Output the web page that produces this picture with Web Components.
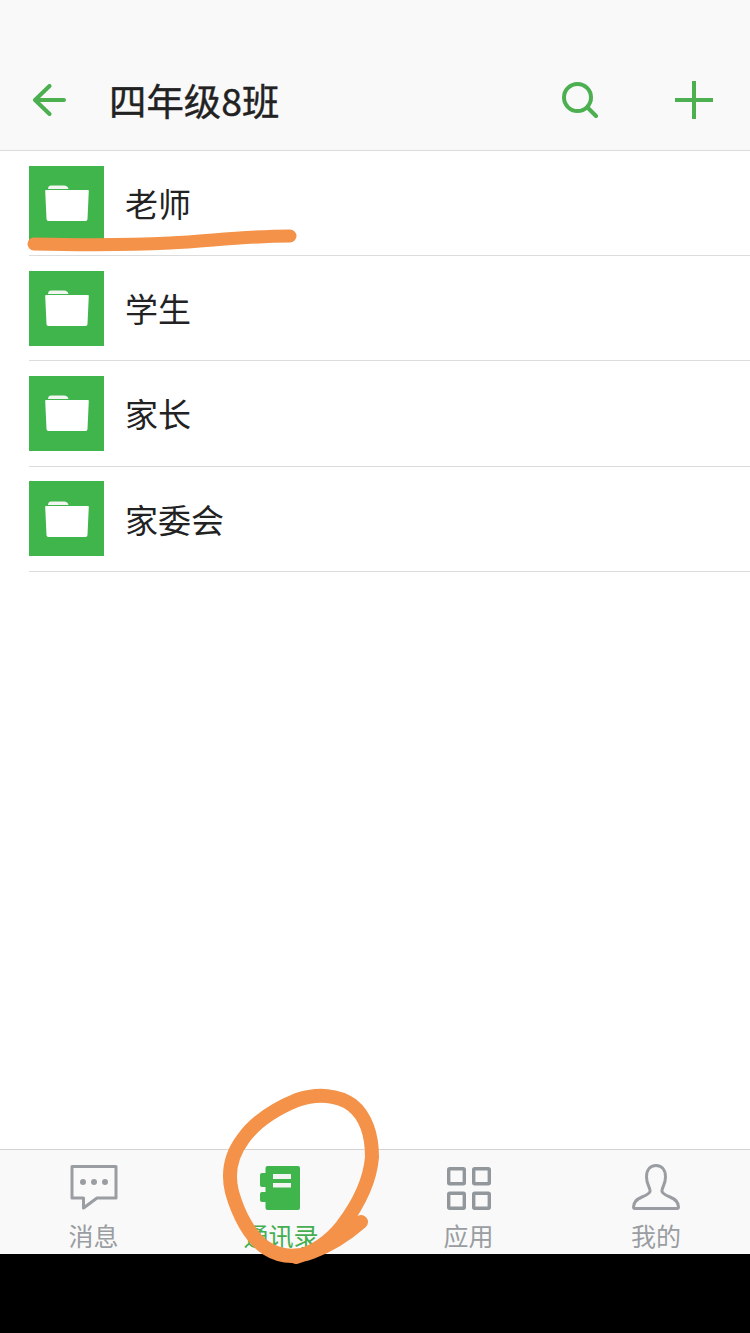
<!DOCTYPE html>
<html lang="zh">
<head>
<meta charset="utf-8">
<title>四年级8班</title>
<style>
  html, body { margin: 0; padding: 0; }
  body { background: #000; font-family: "Noto Sans CJK SC", "Noto Sans", sans-serif; }
</style>
</head>
<body>
<class-page>
  <class-header slot="header" title="四年级8班"></class-header>
  <folder-row>老师</folder-row>
  <folder-row>学生</folder-row>
  <folder-row>家长</folder-row>
  <folder-row>家委会</folder-row>
  <tab-bar slot="tabs">
    <tab-item icon="chat">消息</tab-item>
    <tab-item icon="book" active>通讯录</tab-item>
    <tab-item icon="grid">应用</tab-item>
    <tab-item icon="user">我的</tab-item>
  </tab-bar>
</class-page>

<script>
const ICONS = {
  chat: `<svg width="48" height="46" viewBox="0 0 48 46" fill="none" stroke="currentColor" stroke-width="3" stroke-linejoin="round">
      <path d="M2 1.500H46V33H27L13.500 43V33H2Z"/>
      <g fill="currentColor" stroke="none"><circle cx="13" cy="17" r="3"/><circle cx="24" cy="17" r="3"/><circle cx="35" cy="17" r="3"/></g>
    </svg>`,
  book: `<svg width="42" height="46" viewBox="0 0 42 46">
      <path fill="#3fb54b" d="M5.500 3a2 2 0 0 1 2-2H38a2 2 0 0 1 2 2V43a2 2 0 0 1-2 2H7.500a2 2 0 0 1-2-2V37H2a2 2 0 0 1-2-2V29a2 2 0 0 1 2-2H5.500V22H2a2 2 0 0 1-2-2V10a2 2 0 0 1 2-2H5.500Z"/>
      <path fill="#f4f4f4" d="M13 9H31V14H13ZM13 18H31V22.500H13Z"/>
    </svg>`,
  grid: `<svg width="44" height="43" viewBox="0 0 44 43" fill="none" stroke="#92979c" stroke-width="3.400">
      <rect x="1.700" y="1.700" width="15.600" height="15" rx="1"/><rect x="26.700" y="1.700" width="15.600" height="15" rx="1"/>
      <rect x="1.700" y="26.300" width="15.600" height="15" rx="1"/><rect x="26.700" y="26.300" width="15.600" height="15" rx="1"/>
    </svg>`,
  user: `<svg width="48" height="48" viewBox="0 0 48 48" fill="none" stroke="currentColor" stroke-width="3" stroke-linejoin="round">
      <path d="M24 1.500C18 1.500 14.500 6 14.500 13C14.500 19 17 22 18 26C19 29 15 31 10 33C5 35 1.500 38 1.500 43Q1.500 44.500 3 44.500H45Q46.500 44.500 46.500 43C46.500 38 43 35 38 33C33 31 29 29 30 26C31 22 33.500 19 33.500 13C33.500 6 30 1.500 24 1.500Z"/>
    </svg>`
};

class ClassPage extends HTMLElement {
  constructor() {
    super();
    this.attachShadow({ mode: "open" });
    this.shadowRoot.innerHTML = `
      <style>
        :host { display: flex; flex-direction: column; position: relative; width: 750px; height: 1333px; background: #fff; overflow: hidden; }
        .list { flex: 1; display: flex; flex-direction: column; }
        .black { height: 79px; background: #000; }
        svg { position: absolute; left: 0; top: 0; pointer-events: none; }
      </style>
      <slot name="header"></slot>
      <div class="list"><slot></slot></div>
      <slot name="tabs"></slot>
      <div class="black"></div>
      <svg width="750" height="1333" viewBox="0 0 750 1333" fill="none" stroke="#f39248" stroke-linecap="round" stroke-linejoin="round">
        <path stroke-width="13" d="M34 244C80 245 130 245 170 243C210 241 245 236 290 236"/>
        <path stroke-width="14" d="M361 1222C345 1236 328 1246 312 1252C296 1258 280 1257 266 1248C250 1237 238 1214 232 1192C227 1172 231 1155 243 1139C255 1122 275 1109 297 1100C318 1093 338 1095 352 1105C366 1116 372 1136 372 1157C370 1182 358 1205 342 1226C330 1241 315 1252 296 1257"/>
      </svg>
    `;
  }
}

class ClassHeader extends HTMLElement {
  constructor() {
    super();
    this.attachShadow({ mode: "open" });
    this.shadowRoot.innerHTML = `
      <style>
        :host { display: flex; box-sizing: border-box; height: 151px; padding: 50px 37px 0 33px; align-items: center; background: #f9f9f9; border-bottom: 1px solid #dcdcdc; color: #4caf50; }
        .title { margin-left: 43px; flex: 1; font-size: 37.400px; line-height: 50px; color: #222; -webkit-text-stroke: .4px #222; }
        svg { display: block; flex: none; }
        .search { margin-right: 77px; }
      </style>
      <svg width="33" height="32" viewBox="0 0 33 32" fill="none" stroke="currentColor" stroke-width="4" stroke-linecap="round" stroke-linejoin="round">
        <path d="M16.500 2L2 16L16.500 30M2 16H31"/>
      </svg>
      <span class="title"></span>
      <svg class="search" width="36" height="36" viewBox="0 0 36 36" fill="none" stroke="currentColor" stroke-width="4" stroke-linecap="round">
        <circle cx="15.500" cy="15.500" r="13.500"/><path d="M25.500 25.500L34 34"/>
      </svg>
      <svg width="38" height="38" viewBox="0 0 38 38" fill="none" stroke="currentColor" stroke-width="4">
        <path d="M19 0V38M0 19H38"/>
      </svg>
    `;
  }
  connectedCallback() {
    this.shadowRoot.querySelector(".title").textContent = this.getAttribute("title");
  }
}

class FolderRow extends HTMLElement {
  constructor() {
    super();
    this.attachShadow({ mode: "open" });
    this.shadowRoot.innerHTML = `
      <style>
        :host { display: block; padding-left: 29px; }
        .row { display: flex; align-items: center; gap: 21px; box-sizing: border-box; height: 105.200px; border-bottom: 1px solid #dcdcdc; font-size: 33px; line-height: 78px; color: #222; }
        .tile { width: 75px; height: 75px; background: #3fb54b; display: flex; align-items: center; justify-content: center; flex: none; }
        svg { display: block; }
      </style>
      <div class="row">
        <div class="tile">
          <svg width="44" height="36" viewBox="0 0 44 36">
            <path fill="#fff" d="M1 5H43a.8.8 0 0 1 .8.8L42.500 34a2 2 0 0 1-2 2H3.500a2 2 0 0 1-2-2L.2 5.800A.8.8 0 0 1 1 5Z"/>
            <path fill="#f2f5f2" d="M3 4C3 1.500 4.500 .5 6 .5H19C21.500 .5 23 2 23.500 4Z"/>
          </svg>
        </div>
        <span class="label"><slot></slot></span>
      </div>
    `;
  }
}

class TabBar extends HTMLElement {
  constructor() {
    super();
    this.attachShadow({ mode: "open" });
    this.shadowRoot.innerHTML = `
      <style>
        :host { display: grid; grid-template-columns: 187px 188px 187px 188px; box-sizing: border-box; height: 105px; background: #f9f9f9; border-top: 1px solid #d4d4d4; }
      </style>
      <slot></slot>
    `;
  }
}

class TabItem extends HTMLElement {
  constructor() {
    super();
    this.attachShadow({ mode: "open" });
    this.shadowRoot.innerHTML = `
      <style>
        :host { display: flex; flex-direction: column; align-items: center; padding-top: 14px; color: #9a9da1; font-size: 25px; overflow: hidden; }
        :host([active]) { color: #45ae50; }
        .icon { height: 48px; display: flex; align-items: center; justify-content: center; }
        .label { line-height: 30px; margin-top: 8px; }
        svg { display: block; }
      </style>
      <div class="icon"></div>
      <div class="label"><slot></slot></div>
    `;
  }
  connectedCallback() {
    this.shadowRoot.querySelector(".icon").innerHTML = ICONS[this.getAttribute("icon")];
  }
}

customElements.define("class-page", ClassPage);
customElements.define("class-header", ClassHeader);
customElements.define("folder-row", FolderRow);
customElements.define("tab-bar", TabBar);
customElements.define("tab-item", TabItem);
</script>
</body>
</html>
